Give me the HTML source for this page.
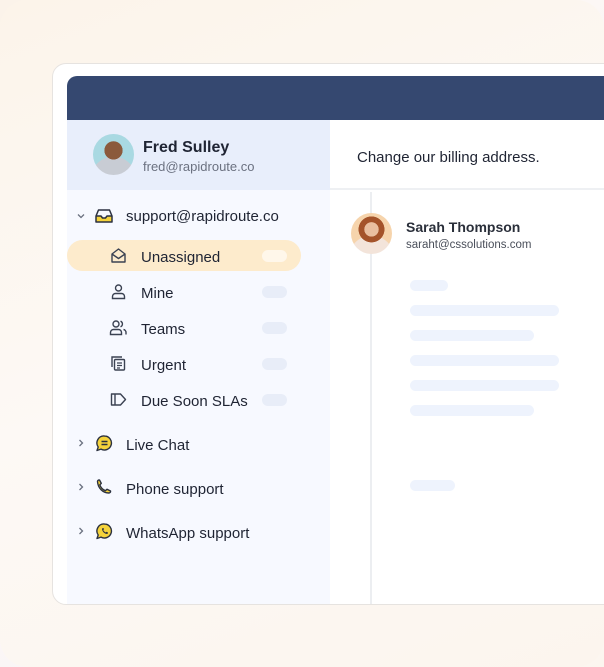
<!DOCTYPE html>
<html><head><style>
*{margin:0;padding:0;box-sizing:border-box}
body{width:604px;height:667px;overflow:hidden;font-family:"Liberation Sans",sans-serif;background:linear-gradient(135deg,#fbf3ea 0%,#fdf8f3 40%,#f7f3fb 70%,#fcf6ef 100%);position:relative;color:#1f2433}
.outer{position:absolute;left:0;top:0;width:604px;height:667px;border-radius:28px;background:linear-gradient(160deg,#fcf4ea,#fdf9f5 50%,#fcf5ee)}
.card{position:absolute;left:52px;top:63px;width:570px;height:542px;background:#fff;border:1px solid #e6e3e0;border-radius:14px}
.hdr{position:absolute;left:67px;top:76px;width:540px;height:44px;background:#354870;border-radius:10px 0 0 0}
.side{position:absolute;left:67px;top:120px;width:263px;height:484px;background:#f7f9ff}
.prof{position:absolute;left:67px;top:120px;width:263px;height:70px;background:#e8eefb}
.av{position:absolute;border-radius:50%}
.t{position:absolute;white-space:nowrap}
.pill{position:absolute;left:262px;width:25px;height:12px;border-radius:6px;background:#e8edf8}
.bar{position:absolute;left:410px;height:11px;border-radius:6px;background:#eef3fd}
svg{position:absolute}
</style></head><body>
<div class="outer"></div>
<div class="card"></div>
<div class="hdr"></div>
<div class="side"></div>
<div class="prof"></div>
<div class="av" style="left:93px;top:134px;width:41px;height:41px;background:radial-gradient(circle at 50% 40%,#8b5a3c 0 28%,transparent 29%),radial-gradient(circle at 50% 110%,#c8ccd4 0 45%,transparent 46%),#a9d9e2"></div>
<div class="t" style="left:143px;top:139px;font-size:16px;font-weight:bold;color:#1f2433">Fred Sulley</div>
<div class="t" style="left:143px;top:159px;font-size:13px;color:#6b7180">fred@rapidroute.co</div>
<div style="position:absolute;left:330px;top:120px;width:274px;height:70px;background:#fff;border-bottom:2px solid #eef0f3"></div>
<div class="t" style="left:357px;top:149px;font-size:15px;color:#1f2433">Change our billing address.</div>
<div style="position:absolute;left:370px;top:192px;width:2px;height:412px;background:#eceef1"></div>
<div class="av" style="left:351px;top:213px;width:41px;height:41px;background:radial-gradient(circle at 50% 40%,#e9bfa0 0 22%,#a4532a 23% 40%,transparent 41%),radial-gradient(circle at 50% 110%,#f3e4da 0 45%,transparent 46%),#f6d4ac"></div>
<div class="t" style="left:406px;top:219px;font-size:14px;font-weight:bold;color:#2a2f3a">Sarah Thompson</div>
<div class="t" style="left:406px;top:239px;font-size:11.5px;color:#4a4f5a">saraht@cssolutions.com</div>
<div class="bar" style="top:280px;width:38px"></div>
<div class="bar" style="top:305px;width:149px"></div>
<div class="bar" style="top:330px;width:124px"></div>
<div class="bar" style="top:355px;width:149px"></div>
<div class="bar" style="top:380px;width:149px"></div>
<div class="bar" style="top:405px;width:124px"></div>
<div class="bar" style="top:480px;width:45px"></div>

<svg style="left:76px;top:211px" width="10" height="10" viewBox="0 0 10 10"><path d="M2 3.5l3 3 3-3" fill="none" stroke="#6b7180" stroke-width="1.3"/></svg>
<svg style="left:94px;top:207px" width="20" height="18" viewBox="0 0 20 18"><path d="M2 9h5l1.5 2h3L13 9h5v6H2z" fill="#f5d33c"/><path d="M2 9l2.5-6h11L18 9v6H2z M2 9h5l1.5 2h3L13 9h5" fill="none" stroke="#2b3140" stroke-width="1.5" stroke-linejoin="round"/></svg>
<div class="t" style="left:126px;top:208px;font-size:15px">support@rapidroute.co</div>

<div style="position:absolute;left:67px;top:240px;width:234px;height:31px;border-radius:16px;background:#fdebcc"></div>
<div class="pill" style="top:250px;background:#fff7ea"></div>
<svg style="left:110px;top:247px" width="17" height="17" viewBox="0 0 17 17"><path d="M2 7l6.5-5L15 7v8H2z M2 7l6.5 4.5L15 7" fill="none" stroke="#3b4252" stroke-width="1.4" stroke-linejoin="round"/></svg>
<div class="t" style="left:141px;top:249px;font-size:15px">Unassigned</div>

<svg style="left:110px;top:283px" width="17" height="17" viewBox="0 0 17 17"><circle cx="8.5" cy="5" r="3" fill="none" stroke="#3b4252" stroke-width="1.4"/><path d="M2.5 15.5v-2a3 3 0 013-3h6a3 3 0 013 3v2z" fill="none" stroke="#3b4252" stroke-width="1.4"/></svg>
<div class="t" style="left:141px;top:285px;font-size:15px">Mine</div>
<div class="pill" style="top:286px"></div>

<svg style="left:109px;top:319px" width="19" height="17" viewBox="0 0 19 17"><circle cx="7" cy="5" r="3" fill="none" stroke="#3b4252" stroke-width="1.4"/><path d="M1.5 15.5v-2a3 3 0 013-3h5a3 3 0 013 3v2z M11.5 2.2a3 3 0 010 5.6 M14.5 10.5a3 3 0 012.5 3v2" fill="none" stroke="#3b4252" stroke-width="1.4"/></svg>
<div class="t" style="left:141px;top:321px;font-size:15px">Teams</div>
<div class="pill" style="top:322px"></div>

<svg style="left:110px;top:355px" width="17" height="17" viewBox="0 0 17 17"><path d="M2 12V2h10" fill="none" stroke="#3b4252" stroke-width="1.4"/><rect x="4.5" y="4.5" width="10" height="10.5" rx="1" fill="none" stroke="#3b4252" stroke-width="1.4"/><path d="M7 8h5M7 10.5h5M7 13h3" stroke="#3b4252" stroke-width="1.2"/></svg>
<div class="t" style="left:141px;top:357px;font-size:15px">Urgent</div>
<div class="pill" style="top:358px"></div>

<svg style="left:110px;top:392px" width="17" height="15" viewBox="0 0 17 15"><path d="M1.5 2h9l5 5.5-5 5.5h-9z M5 2v11" fill="none" stroke="#3b4252" stroke-width="1.4" stroke-linejoin="round"/></svg>
<div class="t" style="left:141px;top:393px;font-size:15px">Due Soon SLAs</div>
<div class="pill" style="top:394px"></div>

<svg style="left:76px;top:438px" width="10" height="10" viewBox="0 0 10 10"><path d="M3.5 2l3 3-3 3" fill="none" stroke="#6b7180" stroke-width="1.3"/></svg>
<svg style="left:95px;top:434px" width="19" height="19" viewBox="0 0 19 19"><path d="M9.5 2a7 7 0 11-3.5 13.1L2 16.5l1.2-3.5A7 7 0 019.5 2z" fill="#f5d33c" stroke="#2b3140" stroke-width="1.4" stroke-linejoin="round"/><path d="M6.5 7.5h6M6.5 10.5h6" stroke="#2b3140" stroke-width="1.4"/></svg>
<div class="t" style="left:126px;top:437px;font-size:15px">Live Chat</div>

<svg style="left:76px;top:482px" width="10" height="10" viewBox="0 0 10 10"><path d="M3.5 2l3 3-3 3" fill="none" stroke="#6b7180" stroke-width="1.3"/></svg>
<svg style="left:95px;top:478px" width="19" height="19" viewBox="0 0 19 19"><path d="M2.5 3.5c0-1 1-1.8 2-1.5l1.8 3.3-1.5 1.6c1 2.6 3 4.8 5.6 5.8l1.6-1.5 3.5 1.8c.3 1-.5 2-1.5 2C8 15 3 10.5 2.5 3.5z" fill="#f5d33c" stroke="#2b3140" stroke-width="1.4" stroke-linejoin="round"/></svg>
<div class="t" style="left:126px;top:481px;font-size:15px">Phone support</div>

<svg style="left:76px;top:526px" width="10" height="10" viewBox="0 0 10 10"><path d="M3.5 2l3 3-3 3" fill="none" stroke="#6b7180" stroke-width="1.3"/></svg>
<svg style="left:95px;top:522px" width="19" height="19" viewBox="0 0 19 19"><path d="M9.5 2a7 7 0 11-3.5 13.1L2 16.5l1.2-3.5A7 7 0 019.5 2z" fill="#f5d33c" stroke="#2b3140" stroke-width="1.4" stroke-linejoin="round"/><path d="M7 6.5c0 3 2.5 5.5 5.5 5.5l.5-1.5-1.5-.8-.8.8c-1-.5-2-1.5-2.5-2.5l.8-.8L8.5 6z" fill="#2b3140"/></svg>
<div class="t" style="left:126px;top:525px;font-size:15px">WhatsApp support</div>
</body></html>
